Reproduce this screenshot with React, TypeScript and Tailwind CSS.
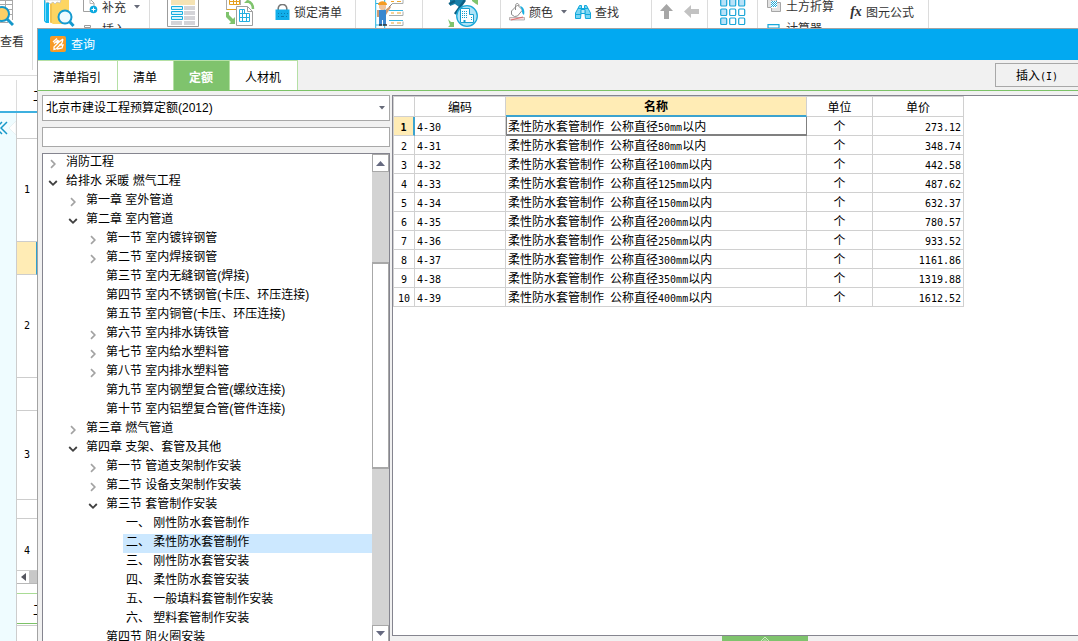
import { ReactNode, useState } from 'react'
import clsx from 'clsx'

type TreeNode = {
  label: string
  level: number
  state?: 'open' | 'closed'
}

const treeNodes: TreeNode[] = [
  { label: '消防工程', level: 0, state: 'closed' },
  { label: '给排水 采暖 燃气工程', level: 0, state: 'open' },
  { label: '第一章 室外管道', level: 1, state: 'closed' },
  { label: '第二章 室内管道', level: 1, state: 'open' },
  { label: '第一节 室内镀锌钢管', level: 2, state: 'closed' },
  { label: '第二节 室内焊接钢管', level: 2, state: 'closed' },
  { label: '第三节 室内无缝钢管(焊接)', level: 2 },
  { label: '第四节 室内不锈钢管(卡压、环压连接)', level: 2 },
  { label: '第五节 室内铜管(卡压、环压连接)', level: 2 },
  { label: '第六节 室内排水铸铁管', level: 2, state: 'closed' },
  { label: '第七节 室内给水塑料管', level: 2, state: 'closed' },
  { label: '第八节 室内排水塑料管', level: 2, state: 'closed' },
  { label: '第九节 室内钢塑复合管(螺纹连接)', level: 2 },
  { label: '第十节 室内铝塑复合管(管件连接)', level: 2 },
  { label: '第三章 燃气管道', level: 1, state: 'closed' },
  { label: '第四章 支架、套管及其他', level: 1, state: 'open' },
  { label: '第一节 管道支架制作安装', level: 2, state: 'closed' },
  { label: '第二节 设备支架制作安装', level: 2, state: 'closed' },
  { label: '第三节 套管制作安装', level: 2, state: 'open' },
  { label: '一、 刚性防水套管制作', level: 3 },
  { label: '二、 柔性防水套管制作', level: 3 },
  { label: '三、 刚性防水套管安装', level: 3 },
  { label: '四、 柔性防水套管安装', level: 3 },
  { label: '五、 一般填料套管制作安装', level: 3 },
  { label: '六、 塑料套管制作安装', level: 3 },
  { label: '第四节 阻火圈安装', level: 2 },
]

const indents = ['pl-0', 'pl-5', 'pl-10', 'pl-15']

const quotas = [
  { code: '4-30', size: '50mm', price: 273.12 },
  { code: '4-31', size: '80mm', price: 348.74 },
  { code: '4-32', size: '100mm', price: 442.58 },
  { code: '4-33', size: '125mm', price: 487.62 },
  { code: '4-34', size: '150mm', price: 632.37 },
  { code: '4-35', size: '200mm', price: 780.57 },
  { code: '4-36', size: '250mm', price: 933.52 },
  { code: '4-37', size: '300mm', price: 1161.86 },
  { code: '4-38', size: '350mm', price: 1319.88 },
  { code: '4-39', size: '400mm', price: 1612.52 },
]

const tabs = ['清单指引', '清单', '定额', '人材机']

// Half-width characters: 6px per glyph next to 12px Chinese text
function Mono({ children }: { children: ReactNode }) {
  return (
    <span className="font-['DejaVu_Sans_Mono',monospace] text-[10px] leading-none whitespace-pre">
      {children}
    </span>
  )
}

function Caret() {
  return (
    <svg width="6" height="4" viewBox="0 0 6 4" className="shrink-0">
      <path d="M0 0h6L3 3.5z" fill="#666a78" />
    </svg>
  )
}

function Chevron({ state }: { state: 'open' | 'closed' }) {
  return state === 'open' ? (
    <svg width="10" height="10" viewBox="0 0 10 10" fill="none">
      <path d="M1.2 3 5 6.8 8.8 3" stroke="#404040" strokeWidth="1.8" />
    </svg>
  ) : (
    <svg width="10" height="10" viewBox="0 0 10 10" fill="none">
      <path d="M3 1.2 6.8 5 3 8.8" stroke="#a3a3a3" strokeWidth="1.7" />
    </svg>
  )
}

function TableSearchIcon() {
  return (
    <svg width="14" height="27" viewBox="0 0 14 27" fill="none">
      <path d="M0 .5h12M0 4.5h12M0 9.5h12M0 14.5h12M5.500 0v14M12.500 0v20M0 22.500h8" stroke="#a9a9a9" />
      <circle cx="2" cy="14" r="7" fill="#ffcf66" stroke="#1597c9" strokeWidth="2" />
      <path d="m7 19 6 6" stroke="#1597c9" strokeWidth="3" />
    </svg>
  )
}

function BinderSearchIcon() {
  return (
    <svg width="33" height="28" viewBox="0 0 33 28" fill="none">
      <path d="M2 0v21l2 2h3V0z" fill="#12b5ec" />
      <path d="M3.500 0v21" stroke="#7fdcf7" />
      <path d="M8 4v18l3 2h12l4-3V0H9z" fill="#fdd562" />
      <path d="M9 4v19" stroke="#e7b040" />
      <path d="M3 0h16l-1 3-3-1-2 2-2-2-3 2-2-2-2 1z" fill="#fff" stroke="#bcbcbc" strokeWidth=".7" />
      <circle cx="23" cy="17" r="6.500" fill="#effbff" stroke="#149ad0" strokeWidth="2" />
      <path d="m27.500 21.500 4 4.500" stroke="#149ad0" strokeWidth="3" />
    </svg>
  )
}

function DocAddIcon() {
  return (
    <svg width="15" height="14" viewBox="0 0 15 14" fill="none">
      <path d="M.5 0v11.500h8M8 0l3 3v3" stroke="#a0a0a0" />
      <path d="M7 0v3.500h4" stroke="#b8b8b8" />
      <circle cx="10.500" cy="9.500" r="3.800" fill="#0ba9df" />
      <path d="M10.500 7.500v4M8.500 9.500h4" stroke="#fff" />
    </svg>
  )
}

function InsertIcon() {
  return (
    <svg width="15" height="10" viewBox="0 0 15 10" fill="none">
      <path d="M1.500 1.500h6v2h-6zM3.500 4v6" stroke="#9b9b9b" />
      <path d="M8 5.500h6M9.500 6v4" stroke="#12a7dd" />
    </svg>
  )
}

function SheetIcon() {
  return (
    <svg width="32" height="28" viewBox="0 0 32 28" fill="none">
      <path d="M.5 0v26.500h31V0" stroke="#9c9c9c" />
      <path d="M4 0h24v5H4z" fill="#f5e3b4" />
      <path d="M4.500 6.500h11v3h-11zM4.500 11.500h11v3h-11zM4.500 16.500h11v3h-11z" fill="#d6f3fb" stroke="#17aedf" />
      <path d="M17 6h11v4H17zM17 11h11v4H17zM17 16h11v4H17zM4 21h11v4H4zM17 21h11v4H17z" fill="#d4d4d8" />
    </svg>
  )
}

function SheetSwapIcon() {
  return (
    <svg width="30" height="27" viewBox="0 0 30 27" fill="none">
      <path d="M1.500 0v10M15.500 0v5" stroke="#aaa" />
      <path d="M4.500 0v4.500h10V0M4 1.500h10M8.500 0v5M11.500 0v5M2 9.500h9" stroke="#e5a020" />
      <path d="M11.500 6.500h11l5 5v14h-16z" fill="#fff" stroke="#9f9f9f" />
      <path d="M22.500 6.500v5h5" stroke="#9f9f9f" />
      <path d="M14.500 9.500h5v4h5v8h-10zM14 13.500h6M14 17.500h10M17.500 9v13M21.500 14v8" stroke="#25afe0" />
      <path d="M22 1c4 1 6 4 6 8" stroke="#7fc36d" strokeWidth="2.500" />
      <path d="m19 3 3-3 3 3zM1 12v5l5 5-2 2h6v-7l-2 2-4-4v-3z" fill="#7fc36d" />
    </svg>
  )
}

function LockIcon() {
  return (
    <svg width="15" height="16" viewBox="0 0 15 16" fill="none">
      <path d="M3.200 7V4.700a4.200 4.200 0 0 1 8.600 0V7" stroke="#777" strokeWidth="1.600" />
      <path d="M.5 5.500h14V16H.5z" fill="#10aeea" />
      <path d="M3 9.500h1m2 0h1m2 0h1m2 0h1M3 12.500h1m2 0h3m2 0h1" stroke="#087caf" />
    </svg>
  )
}

function WorkerIcon() {
  return (
    <svg width="30" height="28" viewBox="0 0 30 28" fill="none">
      <path d="M.7 0v28M9.700 0v28M1 3.500h8M1 25h8" stroke="#25b4e4" />
      <path d="M17 3.500h11V0M14 15.500h14v-4M14 25.500h14v-4" stroke="#a8adad" />
      <path d="M14 10.500h14M14 20.500h14" stroke="#34b8e4" />
      <path d="M16 1.500h3m3 0h4M16 13h3m3 0h4M16 23h3m3 0h4" stroke="#f0a52d" />
      <path d="M3 5c0-5 9-5 9 0z" fill="#f49b22" />
      <path d="M4 5h7v3l-2 2H6L4 8z" fill="#f1c49b" />
      <path d="m9 11 6-5 1 1-5 8zM2 10h3v7H2z" fill="#cf9c74" />
      <path d="M4 10h7v15H8v-5H7v5H4z" fill="#3a87cf" />
      <path d="M4 25h3M8 25h4" stroke="#333" strokeWidth="1.500" />
      <path d="m14 7 3-3" stroke="#888" />
    </svg>
  )
}

function BuildingIcon() {
  return (
    <svg width="31" height="28" viewBox="0 0 31 28" fill="none">
      <path d="M2 0h15l-6 7-4-3-5 2z" fill="#167fa9" />
      <path d="m1 4 6-3M7 14 17 0" stroke="#0b5f83" strokeWidth="2.500" />
      <circle cx="19" cy="16" r="10.300" fill="#aee3f7" stroke="#1ba8d8" strokeWidth="1.300" />
      <path d="M12.500 22.500v-14h9v6h4v8z" fill="#fff" stroke="#189fce" />
      <path d="M14 11.500h6M14 13.500h6M14 15.500h6M14 17.500h6M23 17.500h2M23 19.500h2" stroke="#149dcc" strokeDasharray="1 1" />
      <path d="M16.500 20v3" stroke="#149dcc" strokeWidth="2" />
      <path d="M24 0h6v5l-2-1-4-3zM0 19l3 3h3v5H0l2-2z" fill="#7fc36d" />
    </svg>
  )
}

function PaintIcon() {
  return (
    <svg width="16" height="18" viewBox="0 0 16 18" fill="none">
      <path d="m2.500 8 6-6 5 5-5 6-3 .5-3-2z" fill="#fff" stroke="#8b8b8b" />
      <path d="M6.500 7V2.500C7-.5 10-.2 10 3" stroke="#8b8b8b" />
      <path d="M11 3c4 1 5 5 4 9-2-1-2-3-2-5z" fill="#18afe2" />
      <path d="M.5 14.500h15v2.500H.5z" fill="#f9dada" stroke="#9f9f9f" strokeWidth=".7" />
      <path d="m2 17 12-3" stroke="#e05555" strokeWidth=".8" />
    </svg>
  )
}

function BinocularsIcon() {
  return (
    <svg width="16" height="16" viewBox="0 0 16 16" fill="none">
      <path d="M4.500 1.500h2v3l-1 10h-5V9zM11.500 1.500h-2v3l1 10h5V9z" fill="#78d5f3" stroke="#12a8dc" />
      <path d="M6 5.500h4v4H6zM1 10.500h5M10 10.500h5M3 4.500h10" fill="#b5e9f9" stroke="#12a8dc" />
    </svg>
  )
}

function GridIcon() {
  return (
    <svg width="26" height="26" viewBox="0 0 26 26" fill="none" stroke="#19a6d8" strokeWidth="1.200">
      <rect x=".7" y="-1" width="6" height="7" rx="1" fill="#b9e2f8" />
      <rect x="9.700" y="-1" width="6" height="7" rx="1" fill="#b9e2f8" />
      <rect x="18.700" y="-1" width="6" height="7" rx="1" fill="#b9e2f8" />
      <rect x=".7" y="9" width="6" height="6.500" rx="1" fill="#b9e2f8" />
      <rect x="9.700" y="9" width="6" height="6.500" rx="1" />
      <rect x="18.700" y="9" width="6" height="6.500" rx="1" />
      <rect x=".7" y="18" width="6" height="6.500" rx="1" fill="#b9e2f8" />
      <rect x="9.700" y="18" width="6" height="6.500" rx="1" />
      <rect x="18.700" y="18" width="6" height="6.500" rx="1" />
    </svg>
  )
}

function EarthworkIcon() {
  return (
    <svg width="15" height="12" viewBox="0 0 15 12" fill="none">
      <path d="M.5 0v7.500h9V0M4.500 0v11.500h9v-9h-4" fill="#e2e2e2" stroke="#a6a6a6" />
      <path d="M4 1h6v7H4z" fill="#fff" />
      <path d="M4 2.500h6M4 4.500h6M4 6.500h6" stroke="#1aa9da" strokeDasharray="1 1" />
      <path d="M5 1.500h5M5 3.500h5M5 5.500h5" stroke="#1aa9da" strokeDasharray="1 1" />
    </svg>
  )
}

function CalculatorIcon() {
  return (
    <svg width="15" height="8" viewBox="0 0 15 8" fill="none">
      <path d="M1 8V.7h11V8" stroke="#18a9db" strokeWidth="1.200" />
      <path d="M1 4h11" stroke="#18a9db" />
      <path d="M8 6.500h3" stroke="#aaa" />
    </svg>
  )
}

function Group({ className, children }: { className: string; children?: ReactNode }) {
  return (
    <div className={clsx('flex h-7 shrink-0 items-start border-r border-[#dcdcdc]', className)}>
      {children}
    </div>
  )
}

function ToolButton({ icon, label, caret }: { icon: ReactNode; label: string; caret?: boolean }) {
  return (
    <button className="flex items-center gap-1 whitespace-nowrap">
      {icon}
      <span>{label}</span>
      {caret && (
        <span className="pl-1">
          <Caret />
        </span>
      )}
    </button>
  )
}

function Ribbon() {
  return (
    <div className="flex h-7 shrink-0 overflow-hidden bg-white text-xs leading-[24px] text-[#333]">
      <Group className="w-[113px] gap-2 pl-[5px]">
        <button aria-label="查找资料">
          <BinderSearchIcon />
        </button>
        <div className="flex flex-col gap-[10px] leading-[10px]">
          <ToolButton icon={<DocAddIcon />} label="补充" caret />
          <ToolButton icon={<InsertIcon />} label="插入" />
        </div>
      </Group>
      <Group className="w-[206px] pl-[17px]">
        <button aria-label="表格">
          <SheetIcon />
        </button>
        <button aria-label="转换" className="ml-[26px]">
          <SheetSwapIcon />
        </button>
        <div className="ml-5">
          <ToolButton icon={<LockIcon />} label="锁定清单" />
        </div>
      </Group>
      <Group className="w-[67px] pl-[19px]">
        <button aria-label="人材机">
          <WorkerIcon />
        </button>
      </Group>
      <Group className="w-[78px] pl-[25px]">
        <button aria-label="工程">
          <BuildingIcon />
        </button>
      </Group>
      <Group className="w-[151px] gap-2 pl-2">
        <ToolButton icon={<PaintIcon />} label="颜色" caret />
        <ToolButton icon={<BinocularsIcon />} label="查找" />
      </Group>
      <Group className="w-14 gap-[11px] pt-[4px] pl-2">
        <button aria-label="上移">
          <svg width="13" height="15" viewBox="0 0 13 15">
            <path d="M6.500 0 13 7H9v8H4V7H0z" fill="#a6a6a6" />
          </svg>
        </button>
        <button aria-label="左移">
          <svg width="15" height="15" viewBox="0 0 15 15">
            <path d="m0 7.500 7-6.500v4h8v5H7v4z" fill="#c2c2c2" />
          </svg>
        </button>
      </Group>
      <Group className="w-[50px] pl-3">
        <button aria-label="布局">
          <GridIcon />
        </button>
      </Group>
      <Group className="w-[171px] gap-4 pl-[9px]">
        <div className="flex flex-col gap-[10px] leading-[12px]">
          <ToolButton icon={<EarthworkIcon />} label="土方折算" />
          <ToolButton icon={<CalculatorIcon />} label="计算器" />
        </div>
        <ToolButton
          icon={<i className="w-3 font-['Liberation_Serif',serif] text-[14px] font-bold">fx</i>}
          label="图元公式"
        />
      </Group>
    </div>
  )
}

function SideCell({ className, children }: { className: string; children?: ReactNode }) {
  return (
    <div
      className={clsx(
        'flex shrink-0 items-center justify-center border-b border-[#cdcdcd]',
        className
      )}
    >
      {children}
    </div>
  )
}

// The part of the main window that stays visible beside the dialog
function SideStrip() {
  return (
    <aside className="flex w-[37px] shrink-0 flex-col overflow-hidden bg-white">
      <div className="flex h-[76px] shrink-0 border-b border-[#dcdcdc] pb-[5px]">
        <button className="flex w-[33px] flex-col items-start gap-1 border-r border-[#dcdcdc] text-xs leading-[20px] text-[#333]">
          <TableSearchIcon />
          <span className="whitespace-nowrap">查看</span>
        </button>
      </div>
      <div className="flex h-[35px] shrink-0 pt-1">
        <div className="w-[17px] shrink-0 border-r border-[#dcdcdc]" />
        <span className="pt-[6px] pl-4 text-xs leading-[20px]">工</span>
      </div>
      <div className="flex min-h-0 flex-1 border-t-2 border-[#3eb0df]">
        <div className="w-4 shrink-0 bg-[#effcff] pt-2">
          <svg width="16" height="14" viewBox="0 0 16 14" fill="none">
            <path d="M16 0v14L9 7z" fill="#fff" stroke="#dfe9eb" strokeWidth=".6" />
            <path d="M2 1-4 7l6 6M7 1 1 7l6 6" stroke="#1597c9" strokeWidth="1.500" />
          </svg>
        </div>
        <div className="flex min-w-0 flex-1 flex-col border-l border-[#cdcdcd]">
          <SideCell className="h-[26px]" />
          <SideCell className="h-[103px]">
            <Mono>1</Mono>
          </SideCell>
          <SideCell className="h-[33px] border-r border-r-[#2e9fd0] bg-[#ffecb5]" />
          <SideCell className="h-[103px]">
            <Mono>2</Mono>
          </SideCell>
          <SideCell className="h-[33px]" />
          <SideCell className="h-[89px]">
            <Mono>3</Mono>
          </SideCell>
          <SideCell className="h-[19px]" />
          <SideCell className="h-[52px] pt-3">
            <Mono>4</Mono>
          </SideCell>
          <div className="flex h-[13px] shrink-0 border-b border-[#b8b8b8] bg-[#c8c8c8]">
            <button aria-label="向左滚动" className="flex w-3 items-center justify-center bg-white">
              <svg width="5" height="8" viewBox="0 0 5 8">
                <path d="M5 0v8L0 4z" fill="#55565f" />
              </svg>
            </button>
          </div>
          <div className="mt-[9px] h-[31px] shrink-0 border-t border-b border-t-[#a9dc95] border-b-[#7cc267] pt-[6px] pl-4 text-xs leading-[20px]">
            工
          </div>
          <div className="mt-px flex-1 border-t border-[#cdcdcd]" />
        </div>
      </div>
    </aside>
  )
}

function QuotaTree() {
  const [selected, setSelected] = useState('二、 柔性防水套管制作')

  return (
    <div className="flex min-h-0 flex-1 border border-b-0 border-[#85858f] bg-white">
      <ul className="min-w-0 flex-1 overflow-hidden font-['Liberation_Sans','Noto_Sans_CJK_SC',sans-serif]">
        {treeNodes.map((node) => (
          <li key={node.label} className={clsx('flex h-[19px]', indents[node.level])}>
            <span className="flex w-5 shrink-0 items-center justify-center">
              {node.state && <Chevron state={node.state} />}
            </span>
            <button
              onClick={() => setSelected(node.label)}
              className={clsx(
                'flex-1 pb-[2px] pl-[3px] text-left leading-[17px] whitespace-nowrap',
                node.label === selected && 'bg-[#cce8ff]'
              )}
            >
              {node.label}
            </button>
          </li>
        ))}
      </ul>
      <div className="flex w-[17px] shrink-0 flex-col bg-[#d3d3d3]">
        <button
          aria-label="向上滚动"
          className="flex h-[18px] shrink-0 items-center justify-center border border-[#a8a8a8] bg-white"
        >
          <svg width="9" height="5" viewBox="0 0 9 5">
            <path d="M0 5h9L4.500 0z" fill="#666a80" />
          </svg>
        </button>
        <div className="min-h-0 flex-1 pt-[90px]">
          <div className="h-[207px] border border-t-2 border-b-2 border-[#a8a8a8] bg-white" />
        </div>
        <button
          aria-label="向下滚动"
          className="flex h-4 shrink-0 items-center justify-center border border-b-0 border-[#a8a8a8] bg-white"
        >
          <svg width="9" height="5" viewBox="0 0 9 5">
            <path d="M0 0h9L4.500 5z" fill="#666a80" />
          </svg>
        </button>
      </div>
    </div>
  )
}

function QuotaTable() {
  const cell = 'border-r border-b border-[#d0d0d0] p-0'

  return (
    <table className="w-[571px] table-fixed border-separate border-spacing-0 border-t border-l border-[#d0d0d0] text-xs leading-[16px]">
      <colgroup>
        <col className="w-[21px]" />
        <col className="w-[91px]" />
        <col className="w-[301px]" />
        <col className="w-[66px]" />
        <col className="w-[91px]" />
      </colgroup>
      <thead>
        <tr className="h-5">
          <th className={cell} />
          <th className={clsx(cell, 'font-normal')}>编码</th>
          <th className="border-r border-b-2 border-r-[#d0d0d0] border-b-[#3ba3cf] bg-[#ffecb5] p-0 font-bold">
            名称
          </th>
          <th className={clsx(cell, 'font-normal')}>单位</th>
          <th className={clsx(cell, 'font-normal')}>单价</th>
        </tr>
      </thead>
      <tbody>
        {quotas.map((quota, index) => (
          <tr key={quota.code} className="h-[19px]">
            <th
              className={clsx(
                'border-b border-b-[#d0d0d0] p-0 text-center',
                index === 0
                  ? 'border-r-2 border-r-[#3ba3cf] bg-[#ffecb5] font-bold'
                  : 'border-r border-r-[#d0d0d0] font-normal'
              )}
            >
              <Mono>{index + 1}</Mono>
            </th>
            <td className={clsx(cell, 'pl-[2px]')}>
              <Mono>{quota.code}</Mono>
            </td>
            <td
              className={clsx(
                'py-0 pr-0 whitespace-nowrap',
                index === 0
                  ? 'border-r border-b-2 border-l border-[#808080] pl-px'
                  : 'border-r border-b border-[#d0d0d0] pl-[2px]'
              )}
            >
              柔性防水套管制作<Mono> </Mono>公称直径<Mono>{quota.size}</Mono>以内
            </td>
            <td className={clsx(cell, 'text-center')}>个</td>
            <td className={clsx(cell, 'pr-[2px] text-right')}>
              <Mono>{quota.price.toFixed(2)}</Mono>
            </td>
          </tr>
        ))}
      </tbody>
    </table>
  )
}

function QueryDialog() {
  const [activeTab, setActiveTab] = useState('定额')

  return (
    <section className="flex min-h-0 flex-1 flex-col border-t border-l border-[#a3a3a3] bg-[#f1f1f1] text-xs text-black">
      <header className="flex h-[31px] shrink-0 items-center gap-[5px] bg-[#02a9f1] pb-px pl-3 text-white">
        <svg width="16" height="16" viewBox="0 0 16 16" fill="none">
          <rect width="16" height="16" rx="2" fill="#f79a26" />
          <path d="M3 6 7 2.500M4 7.500 8 4M6.500 7 9 4.500M9 6l4-3M13 3l-1 4-6 6-2 .5V11l6-6M7 13l5-1 1-3H9" stroke="#fff" strokeWidth="1.300" />
        </svg>
        <h1>查询</h1>
      </header>

      <div className="flex h-[31px] shrink-0 items-stretch justify-between border-b border-[#7cc267]">
        <div className="flex">
          {tabs.map((tab) => (
            <button
              key={tab}
              onClick={() => setActiveTab(tab)}
              className={clsx(
                'border-t border-r border-[#b5e0a5] pt-[2px] pr-4 pl-[15px]',
                tab === activeTab ? 'bg-[#7fc36d] font-bold text-white' : 'bg-white'
              )}
            >
              {tab}
            </button>
          ))}
        </div>
        <button className="my-[3px] w-[83px] border border-r-0 border-[#a8a8a8] bg-[#f1f1f1]">
          插入<Mono>(I)</Mono>
        </button>
      </div>

      <div className="flex min-h-0 flex-1 gap-[2px] pt-1 pl-1">
        <div className="flex w-[348px] shrink-0 flex-col gap-[6px]">
          <div className="relative shrink-0">
            <select
              aria-label="定额库"
              className="h-[26px] w-full appearance-none rounded-none border border-[#a8a8a8] bg-white pl-[3px] font-['Liberation_Sans','Noto_Sans_CJK_SC',sans-serif] text-xs"
            >
              <option>北京市建设工程预算定额(2012)</option>
            </select>
            <span className="pointer-events-none absolute inset-y-0 right-[5px] flex items-center">
              <Caret />
            </span>
          </div>
          <input
            type="text"
            aria-label="搜索"
            className="h-5 shrink-0 border border-[#a8a8a8] bg-white px-1 outline-none"
          />
          <QuotaTree />
        </div>

        <div className="flex min-w-0 flex-1 flex-col">
          <div className="min-h-0 flex-1 overflow-hidden border border-r-0 border-[#85858f] bg-white">
            <QuotaTable />
          </div>
          <div className="flex h-[5px] shrink-0 justify-center pl-[60px]">
            <button
              aria-label="展开"
              className="flex w-[86px] items-end justify-center bg-[#7fc36d]"
            >
              <svg width="10" height="5" viewBox="0 0 10 5" fill="none">
                <path d="M1 5 5 1l4 4M3.500 5 5 3.500 6.500 5" stroke="#cdebc4" />
              </svg>
            </button>
          </div>
        </div>
      </div>
    </section>
  )
}

export default function App() {
  return (
    <div className="flex h-screen overflow-hidden bg-white font-['Noto_Sans_CJK_SC',sans-serif]">
      <SideStrip />
      <main className="flex min-w-0 flex-1 flex-col">
        <Ribbon />
        <QueryDialog />
      </main>
    </div>
  )
}
